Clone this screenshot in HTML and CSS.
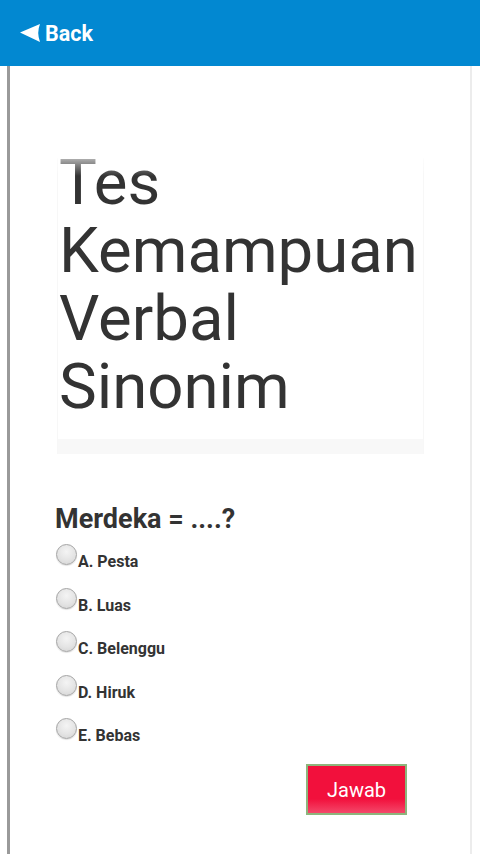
FILE: index.html
```html
<!DOCTYPE html>
<html>
<head>
<meta charset="utf-8">
<link rel="stylesheet" href="styles.css">
</head>
<body>
<header class="appbar">
  <svg class="back-icon" width="22" height="20" viewBox="0 0 22 20"><path d="M1 9.5 L21 1 Q17.5 9.5 21 19 Z" fill="#fff"/></svg>
  <span class="back-label">Back</span>
</header>
<main class="page">
  <section class="title-box">
    <h1 class="title">Tes<br>Kemampuan<br>Verbal<br>Sinonim</h1>
    <div class="title-fade"></div>
    <div class="title-band"></div>
  </section>
  <h2 class="question">Merdeka = ....?</h2>
  <ul class="options">
    <li class="option"><span class="radio"></span><span class="opt-label">A. Pesta</span></li>
    <li class="option"><span class="radio"></span><span class="opt-label">B. Luas</span></li>
    <li class="option"><span class="radio"></span><span class="opt-label">C. Belenggu</span></li>
    <li class="option"><span class="radio"></span><span class="opt-label">D. Hiruk</span></li>
    <li class="option"><span class="radio"></span><span class="opt-label">E. Bebas</span></li>
  </ul>
  <div class="actions">
    <button class="btn-answer">Jawab</button>
  </div>
</main>
</body>
</html>
```
FILE: styles.css
```css
html, body {
  margin: 0;
  padding: 0;
  background: #fff;
  font-family: Roboto, "Liberation Sans", sans-serif;
  color: #333;
}
.appbar {
  height: 66px;
  background: #0288d1;
  display: flex;
  align-items: center;
  padding-left: 19px;
  box-sizing: border-box;
}
.back-icon {
  display: block;
}
.back-label {
  color: #fff;
  font-weight: bold;
  font-size: 21.5px;
  margin-left: 4px;
  margin-top: 1px;
}
.page {
  margin-left: 7px;
  width: 465px;
  box-sizing: border-box;
  border-left: 3px solid #9a9a9a;
  border-right: 2px solid #ececec;
  min-height: calc(100vh - 66px);
  padding-top: 83px;
  padding-bottom: 20px;
}
.title-box {
  position: relative;
  margin-left: 47px;
  width: 367px;
  border-left: 1px solid #f7f7f7;
  border-right: 1px solid #f7f7f7;
  box-sizing: border-box;
}
.title {
  margin: 0;
  font-weight: normal;
  font-size: 63.5px;
  line-height: 68px;
  color: #333;
  padding-left: 1px;
  padding-bottom: 18px;
}
.title-fade {
  position: absolute;
  left: -1px;
  top: 0;
  width: calc(100% + 2px);
  height: 28px;
  background: linear-gradient(to bottom, rgba(255,255,255,1) 0px, rgba(255,255,255,1) 9px, rgba(255,255,255,0.6) 10px, rgba(255,255,255,0) 27px);
}
.title-band {
  height: 15px;
  background: #f8f8f8;
}
.question {
  margin: 51px 0 0 45px;
  font-size: 27px;
  font-weight: bold;
  line-height: 28px;
  color: #333;
}
.options {
  list-style: none;
  margin: 11px 0 0 46px;
  padding: 0;
  display: flex;
  flex-direction: column;
  gap: 17.5px;
}
.option {
  display: flex;
  align-items: flex-start;
  height: 26px;
}
.radio {
  width: 21px;
  height: 21px;
  border-radius: 50%;
  box-sizing: border-box;
  border: 1px solid #a4a4a4;
  background: radial-gradient(circle at 50% 35%, #f4f4f4 0%, #e4e4e4 55%, #d2d2d2 100%);
  box-shadow: 0 1px 1px rgba(0,0,0,0.12);
  flex: none;
}
.opt-label {
  margin-left: 1px;
  margin-top: 8px;
  font-size: 16px;
  font-weight: bold;
  line-height: 19px;
  color: #333;
}
.actions {
  display: flex;
  justify-content: flex-end;
  padding-right: 63px;
  margin-top: 20px;
}
.btn-answer {
  width: 101px;
  height: 51px;
  box-sizing: border-box;
  border: 2px solid #8db57c;
  background: linear-gradient(to bottom, #f2103c 0%, #f2103c 70%, #f4486a 100%);
  color: #fff;
  font-family: Roboto, "Liberation Sans", sans-serif;
  font-size: 20px;
  font-weight: normal;
  padding: 0;
}
```
